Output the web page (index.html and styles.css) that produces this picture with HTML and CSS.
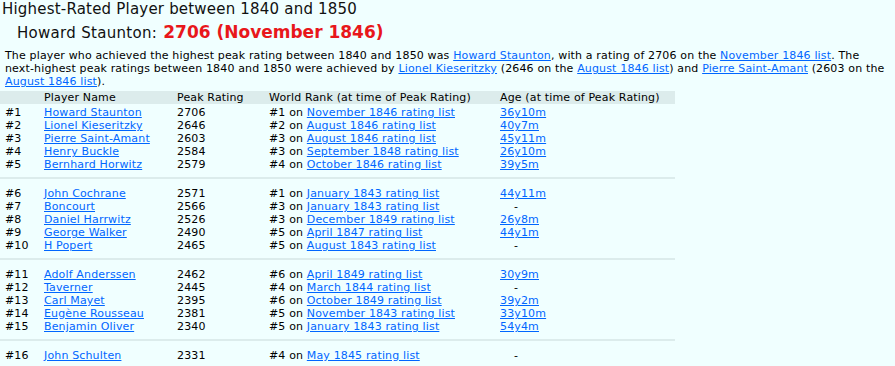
FILE: index.html
```html
<!DOCTYPE html>
<html>
<head>
<meta charset="utf-8">
<link rel="stylesheet" href="styles.css">
</head>
<body>
<h1 class="title">Highest-Rated Player between 1840 and 1850</h1>
<h2 class="sub">Howard Staunton: <span class="peak">2706 (November 1846)</span></h2>
<p class="intro">The player who achieved the highest peak rating between 1840 and 1850 was <a href="#">Howard Staunton</a>, with a rating of 2706 on the <a href="#">November 1846 list</a>. The <span class="nobr">next-highest</span> peak ratings between 1840 and 1850 were achieved by <a href="#">Lionel Kieseritzky</a> (2646 on the <a href="#">August 1846 list</a>) and <a href="#">Pierre Saint-Amant</a> (2603 on the <a href="#">August 1846 list</a>).</p>
<table class="players">
<thead>
<tr class="head"><th class="c-rank"></th><th class="c-name">Player Name</th><th class="c-peak">Peak Rating</th><th class="c-world">World Rank (at time of Peak Rating)</th><th class="c-age">Age (at time of Peak Rating)</th></tr>
</thead>
<tbody>
<tr><td>#1</td><td><a href="#">Howard Staunton</a></td><td>2706</td><td>#1 on <a href="#">November 1846 rating list</a></td><td><a href="#">36y10m</a></td></tr>
<tr><td>#2</td><td><a href="#">Lionel Kieseritzky</a></td><td>2646</td><td>#2 on <a href="#">August 1846 rating list</a></td><td><a href="#">40y7m</a></td></tr>
<tr><td>#3</td><td><a href="#">Pierre Saint-Amant</a></td><td>2603</td><td>#3 on <a href="#">August 1846 rating list</a></td><td><a href="#">45y11m</a></td></tr>
<tr><td>#4</td><td><a href="#">Henry Buckle</a></td><td>2584</td><td>#3 on <a href="#">September 1848 rating list</a></td><td><a href="#">26y10m</a></td></tr>
<tr><td>#5</td><td><a href="#">Bernhard Horwitz</a></td><td>2579</td><td>#4 on <a href="#">October 1846 rating list</a></td><td><a href="#">39y5m</a></td></tr>
<tr class="sep"><td colspan="5"><div class="rule"></div></td></tr>
<tr><td>#6</td><td><a href="#">John Cochrane</a></td><td>2571</td><td>#1 on <a href="#">January 1843 rating list</a></td><td><a href="#">44y11m</a></td></tr>
<tr><td>#7</td><td><a href="#">Boncourt</a></td><td>2566</td><td>#3 on <a href="#">January 1843 rating list</a></td><td><span class="dash">-</span></td></tr>
<tr><td>#8</td><td><a href="#">Daniel Harrwitz</a></td><td>2526</td><td>#3 on <a href="#">December 1849 rating list</a></td><td><a href="#">26y8m</a></td></tr>
<tr><td>#9</td><td><a href="#">George Walker</a></td><td>2490</td><td>#5 on <a href="#">April 1847 rating list</a></td><td><a href="#">44y1m</a></td></tr>
<tr><td>#10</td><td><a href="#">H Popert</a></td><td>2465</td><td>#5 on <a href="#">August 1843 rating list</a></td><td><span class="dash">-</span></td></tr>
<tr class="sep"><td colspan="5"><div class="rule"></div></td></tr>
<tr><td>#11</td><td><a href="#">Adolf Anderssen</a></td><td>2462</td><td>#6 on <a href="#">April 1849 rating list</a></td><td><a href="#">30y9m</a></td></tr>
<tr><td>#12</td><td><a href="#">Taverner</a></td><td>2445</td><td>#4 on <a href="#">March 1844 rating list</a></td><td><span class="dash">-</span></td></tr>
<tr><td>#13</td><td><a href="#">Carl Mayet</a></td><td>2395</td><td>#6 on <a href="#">October 1849 rating list</a></td><td><a href="#">39y2m</a></td></tr>
<tr><td>#14</td><td><a href="#">Eugène Rousseau</a></td><td>2381</td><td>#5 on <a href="#">November 1843 rating list</a></td><td><a href="#">33y10m</a></td></tr>
<tr><td>#15</td><td><a href="#">Benjamin Oliver</a></td><td>2340</td><td>#5 on <a href="#">January 1843 rating list</a></td><td><a href="#">54y4m</a></td></tr>
<tr class="sep"><td colspan="5"><div class="rule"></div></td></tr>
<tr><td>#16</td><td><a href="#">John Schulten</a></td><td>2331</td><td>#4 on <a href="#">May 1845 rating list</a></td><td><span class="dash">-</span></td></tr>
</tbody>
</table>
</body>
</html>
```
FILE: styles.css
```css
html, body {
  margin: 0;
  padding: 0;
  background: #f0ffff;
}
body {
  font-family: Verdana, "DejaVu Sans", sans-serif;
  font-size: 11px;
  letter-spacing: 0.15px;
  color: #000;
}
a {
  color: #0066ff;
  text-decoration: underline;
}
.nobr {
  white-space: nowrap;
}
.title {
  font-size: 15px;
  font-weight: normal;
  letter-spacing: 0.2px;
  line-height: 18px;
  margin: 0;
  padding: 0 0 0 2px;
  color: #111;
}
.sub {
  font-size: 15px;
  font-weight: normal;
  letter-spacing: 0.3px;
  line-height: 22px;
  margin: 0;
  padding: 3px 0 0 17px;
  color: #111;
}
.peak {
  color: #e8171b;
  font-weight: bold;
  font-size: 17px;
  letter-spacing: 0;
  margin-left: 1px;
}
.intro {
  margin: 5px 2px 0 5px;
  line-height: 13px;
}
.players {
  border-collapse: collapse;
  margin-top: 3px;
  width: 675px;
}
.players th, .players td {
  padding: 0;
  text-align: left;
  font-weight: normal;
  line-height: 13px;
  white-space: nowrap;
  vertical-align: top;
}
.head th {
  background: #dcecec;
}
.players td:first-child, .players th:first-child {
  padding-left: 5px;
  width: 39px;
}
.c-name { width: 133px; }
.c-peak { width: 92px; }
.c-world { width: 231px; }
.players tbody tr:first-child td {
  padding-top: 2px;
}
.sep td {
  padding: 6px 0 8px 0 !important;
}
.rule {
  height: 2px;
  background: #dcecec;
}
.dash {
  padding-left: 14px;
}
```
